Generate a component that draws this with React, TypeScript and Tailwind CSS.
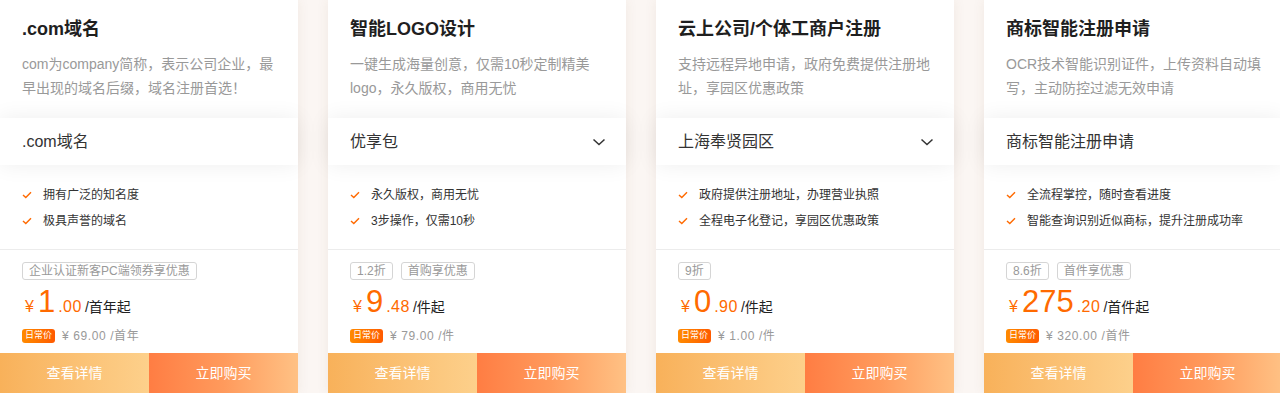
import React from "react";

type Product = {
  title: string;
  desc: string;
  wideDesc?: boolean;
  option: string;
  dropdown: boolean;
  features: string[];
  tags: string[];
  int: string;
  dec: string;
  unit: string;
  daily: string;
};

const PRODUCTS: Product[] = [
  {
    title: ".com域名",
    desc: "com为company简称，表示公司企业，最早出现的域名后缀，域名注册首选！",
    option: ".com域名",
    dropdown: false,
    features: ["拥有广泛的知名度", "极具声誉的域名"],
    tags: ["企业认证新客PC端领券享优惠"],
    int: "1",
    dec: ".00",
    unit: "/首年起",
    daily: "¥ 69.00 /首年",
  },
  {
    title: "智能LOGO设计",
    desc: "一键生成海量创意，仅需10秒定制精美logo，永久版权，商用无忧",
    option: "优享包",
    dropdown: true,
    features: ["永久版权，商用无忧", "3步操作，仅需10秒"],
    tags: ["1.2折", "首购享优惠"],
    int: "9",
    dec: ".48",
    unit: "/件起",
    daily: "¥ 79.00 /件",
  },
  {
    title: "云上公司/个体工商户注册",
    desc: "支持远程异地申请，政府免费提供注册地址，享园区优惠政策",
    option: "上海奉贤园区",
    dropdown: true,
    features: ["政府提供注册地址，办理营业执照", "全程电子化登记，享园区优惠政策"],
    tags: ["9折"],
    int: "0",
    dec: ".90",
    unit: "/件起",
    daily: "¥ 1.00 /件",
  },
  {
    title: "商标智能注册申请",
    desc: "OCR技术智能识别证件，上传资料自动填写，主动防控过滤无效申请",
    wideDesc: true,
    option: "商标智能注册申请",
    dropdown: false,
    features: ["全流程掌控，随时查看进度", "智能查询识别近似商标，提升注册成功率"],
    tags: ["8.6折", "首件享优惠"],
    int: "275",
    dec: ".20",
    unit: "/首件起",
    daily: "¥ 320.00 /首件",
  },
];

function Check() {
  return (
    <svg width="10" height="8" viewBox="0 0 10 8" className="shrink-0">
      <polyline points="1,4 3.8,6.6 9,1.2" fill="none" stroke="#ff6a00" strokeWidth="1.4" />
    </svg>
  );
}

function Chevron() {
  return (
    <svg width="14" height="8" viewBox="0 0 14 8">
      <polyline points="1.5,1.5 7,6.5 12.5,1.5" fill="none" stroke="#333" strokeWidth="1.5" />
    </svg>
  );
}

function Card({ p }: { p: Product }) {
  return (
    <div className="w-[298px] shrink-0 bg-white flex flex-col shadow-[0_0_12px_rgba(120,80,40,0.08)]">
      {/* Header */}
      <div className="h-[118px] px-[22px] pt-[19px]">
        <h3 className="text-[18px] leading-[20px] font-bold text-[#1f1f1f]">{p.title}</h3>
        <p
          className={`mt-[13px] text-[14px] leading-[24px] text-[#999] ${
            p.wideDesc ? "-mr-[10px]" : ""
          }`}
        >
          {p.desc}
        </p>
      </div>

      {/* Option selector */}
      <div className="relative z-10 h-[47px] pl-[22px] pr-[20px] flex items-center justify-between bg-white shadow-[0_0_22px_rgba(0,0,0,0.07)]">
        <span className="text-[16px] text-[#333]">{p.option}</span>
        {p.dropdown && <Chevron />}
      </div>

      {/* Features */}
      <div className="h-[85px] px-[22px] pt-[17px] border-b border-[#ececec]">
        {p.features.map((f) => (
          <div key={f} className="flex items-center gap-[11px] h-[26px] text-[12px] text-[#333]">
            <Check />
            <span>{f}</span>
          </div>
        ))}
      </div>

      {/* Price */}
      <div className="h-[103px] px-[22px] pt-[12px]">
        <div className="flex gap-[8px]">
          {p.tags.map((t) => (
            <span
              key={t}
              className="h-[18px] px-[6px] flex items-center border border-[#d5d5d5] rounded-[3px] text-[12px] text-[#999]"
            >
              {t}
            </span>
          ))}
        </div>
        <div className="mt-[6px] h-[32px] flex items-baseline text-[#ff6a00]">
          <span className="text-[16px] ml-[3px] mr-[4px]">¥</span>
          <span className="text-[31px] leading-[32px]">{p.int}</span>
          <span className="text-[16px] tracking-[0.5px] ml-[3px]">{p.dec}</span>
          <span className="text-[14px] text-[#222] ml-[3px]">{p.unit}</span>
        </div>
        <div className="mt-[9px] flex items-center gap-[7px]">
          <span className="h-[14px] px-[3px] flex items-center rounded-[3px] bg-gradient-to-r from-[#ff8a00] to-[#ff5a00] text-[9px] text-white">
            日常价
          </span>
          <span className="text-[12px] text-[#999] tracking-[0.6px]">{p.daily}</span>
        </div>
      </div>

      {/* Actions */}
      <div className="h-[40px] flex">
        <button className="flex-1 bg-gradient-to-r from-[#f8b15a] to-[#fdd08b] text-white text-[14px]">
          查看详情
        </button>
        <button className="flex-1 bg-gradient-to-r from-[#ff7d43] via-[#ff9a5c] to-[#ffc184] text-white text-[14px]">
          立即购买
        </button>
      </div>
    </div>
  );
}

export default function App() {
  return (
    <div
      className="w-[1280px] h-[393px] overflow-hidden bg-[#fbf6f3]"
      style={{ fontFamily: '"Liberation Sans", "Noto Sans CJK SC", sans-serif' }}
    >
      <div className="flex gap-[30px]">
        {PRODUCTS.map((p) => (
          <Card key={p.title} p={p} />
        ))}
      </div>
    </div>
  );
}
